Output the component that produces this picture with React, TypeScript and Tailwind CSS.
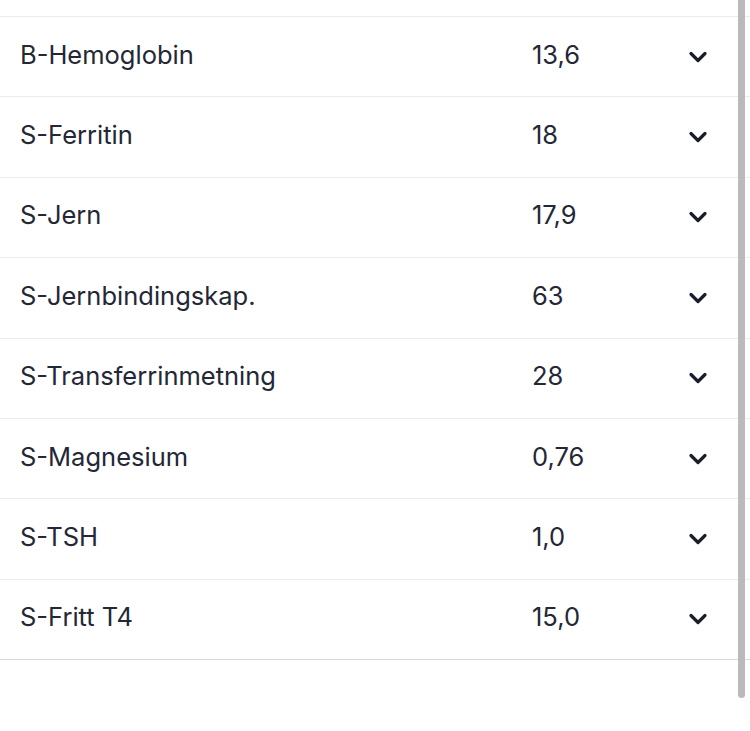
import React from "react";
import { ChevronDown } from "lucide-react";

const results = [
  { name: "B-Hemoglobin", value: "13,6" },
  { name: "S-Ferritin", value: "18" },
  { name: "S-Jern", value: "17,9" },
  { name: "S-Jernbindingskap.", value: "63" },
  { name: "S-Transferrinmetning", value: "28" },
  { name: "S-Magnesium", value: "0,76" },
  { name: "S-TSH", value: "1,0" },
  { name: "S-Fritt T4", value: "15,0" },
];

function ResultRow({ name, value }: { name: string; value: string }) {
  return (
    <div className="flex h-[80.4px] items-center border-t border-[#ebebee] pl-5 pr-[38px]">
      <span className="flex-1 pb-1">{name}</span>
      <span className="w-[152px] pb-1">{value}</span>
      <button className="flex h-7 w-7 items-center justify-center text-[#1a1e2c]">
        <ChevronDown size={28} strokeWidth={2.75} />
      </button>
    </div>
  );
}

export default function App() {
  return (
    <div className="relative h-[731px] w-[750px] overflow-hidden bg-white font-['Inter',sans-serif] text-[25.5px] text-[#232736]">
      <div className="pt-4">
        <div className="border-b border-[#d9d9dd]">
          {results.map((r) => (
            <ResultRow key={r.name} name={r.name} value={r.value} />
          ))}
        </div>
      </div>
      <div className="absolute right-[5px] top-0 h-[698px] w-[7px] rounded-b-full bg-[#bababa]" />
    </div>
  );
}
